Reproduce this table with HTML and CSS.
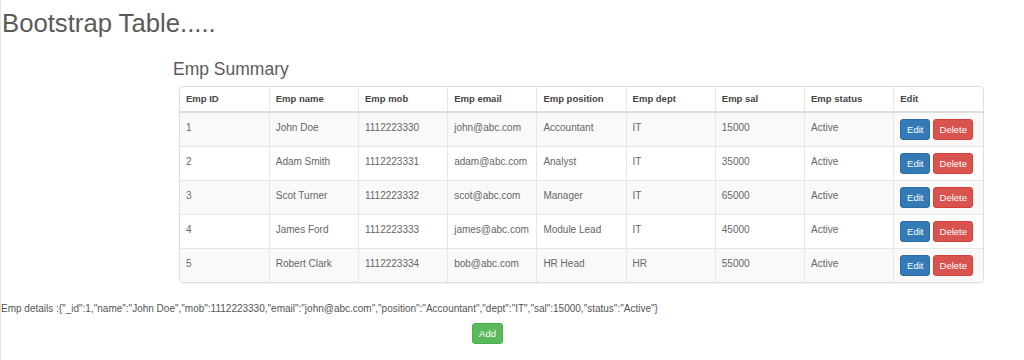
FILE: index.html
```html
<!DOCTYPE html>
<html>
<head>
<meta charset="utf-8">
<link rel="stylesheet" href="styles.css">
</head>
<body>
<h1 class="title">Bootstrap Table.....</h1>
<section class="summary">
  <h2 class="summary-title">Emp Summary</h2>
  <div class="table-panel">
    <table class="emp-table">
      <thead>
        <tr><th>Emp ID</th><th>Emp name</th><th>Emp mob</th><th>Emp email</th><th>Emp position</th><th>Emp dept</th><th>Emp sal</th><th>Emp status</th><th>Edit</th></tr>
      </thead>
      <tbody>
        <tr><td>1</td><td>John Doe</td><td>1112223330</td><td>john@abc.com</td><td>Accountant</td><td>IT</td><td>15000</td><td>Active</td><td class="actions"><button class="btn btn-edit">Edit</button><button class="btn btn-delete">Delete</button></td></tr>
        <tr><td>2</td><td>Adam Smith</td><td>1112223331</td><td>adam@abc.com</td><td>Analyst</td><td>IT</td><td>35000</td><td>Active</td><td class="actions"><button class="btn btn-edit">Edit</button><button class="btn btn-delete">Delete</button></td></tr>
        <tr><td>3</td><td>Scot Turner</td><td>1112223332</td><td>scot@abc.com</td><td>Manager</td><td>IT</td><td>65000</td><td>Active</td><td class="actions"><button class="btn btn-edit">Edit</button><button class="btn btn-delete">Delete</button></td></tr>
        <tr><td>4</td><td>James Ford</td><td>1112223333</td><td>james@abc.com</td><td>Module Lead</td><td>IT</td><td>45000</td><td>Active</td><td class="actions"><button class="btn btn-edit">Edit</button><button class="btn btn-delete">Delete</button></td></tr>
        <tr><td>5</td><td>Robert Clark</td><td>1112223334</td><td>bob@abc.com</td><td>HR Head</td><td>HR</td><td>55000</td><td>Active</td><td class="actions"><button class="btn btn-edit">Edit</button><button class="btn btn-delete">Delete</button></td></tr>
      </tbody>
    </table>
  </div>
</section>
<p class="details">Emp details :{"_id":1,"name":"John Doe","mob":1112223330,"email":"john@abc.com","position":"Accountant","dept":"IT","sal":15000,"status":"Active"}</p>
<div class="add-row"><button class="btn btn-add">Add</button></div>
</body>
</html>
```
FILE: styles.css
```css
html, body {
  margin: 0;
  padding: 0;
  background: #fff;
}
body {
  font-family: "Liberation Sans", Arial, sans-serif;
  color: #555;
  border-left: 1px solid #e4e4e4;
  min-height: 360px;
  box-sizing: border-box;
}
.title {
  margin: 0;
  padding: 8px 0 0 1px;
  font-size: 25.7px;
  font-weight: normal;
  line-height: 30px;
  color: #5a5a5a;
}
.summary {
  padding-left: 172px;
  margin-top: 21px;
}
.summary-title {
  margin: 0 0 7px 0;
  font-size: 17.5px;
  font-weight: normal;
  line-height: 20px;
  color: #5a5a5a;
}
.table-panel {
  margin-left: 6px;
  width: 803px;
  border: 1px solid #dedede;
  border-radius: 4px;
  overflow: hidden;
  box-shadow: 0 1px 1px rgba(0,0,0,0.05);
}
.emp-table {
  width: 100%;
  border-collapse: collapse;
  table-layout: fixed;
  font-size: 10px;
  line-height: 14px;
}
.emp-table th, .emp-table td {
  text-align: left;
  vertical-align: top;
  padding: 8px 6px 4px;
  border-left: 1px solid #e6e6e6;
}
.emp-table th:first-child, .emp-table td:first-child {
  border-left: none;
}
.emp-table th {
  font-weight: bold;
  color: #444;
  font-size: 9.5px;
  padding: 5px 6px;
  border-bottom: 2px solid #dedede;
}
.emp-table td {
  border-top: 1px solid #e6e6e6;
  height: 21px;
  color: #666;
}
.emp-table tbody tr:first-child td {
  border-top: none;
}
.emp-table tbody tr:nth-child(odd) {
  background: #f9f9f9;
}
.emp-table td.actions {
  padding: 6px 6px;
  white-space: nowrap;
}
.btn {
  font-family: "Liberation Sans", Arial, sans-serif;
  font-size: 9.5px;
  line-height: 13px;
  height: 21px;
  padding: 3px 0;
  text-align: center;
  border: 1px solid transparent;
  border-radius: 3px;
  color: #fff;
  cursor: pointer;
  box-sizing: border-box;
  vertical-align: top;
}
.btn-edit {
  width: 30px;
  background: #337ab7;
  border-color: #2e6da4;
  margin-right: 3px;
}
.btn-delete {
  width: 40px;
  background: #d9534f;
  border-color: #d43f3a;
}
.btn-add {
  width: 31px;
  background: #5cb85c;
  border-color: #4cae4c;
}
.details {
  margin: 20px 0 0 0;
  font-size: 10px;
  line-height: 12px;
  color: #555;
}
.add-row {
  margin-top: 8px;
  padding-left: 471px;
}
```
